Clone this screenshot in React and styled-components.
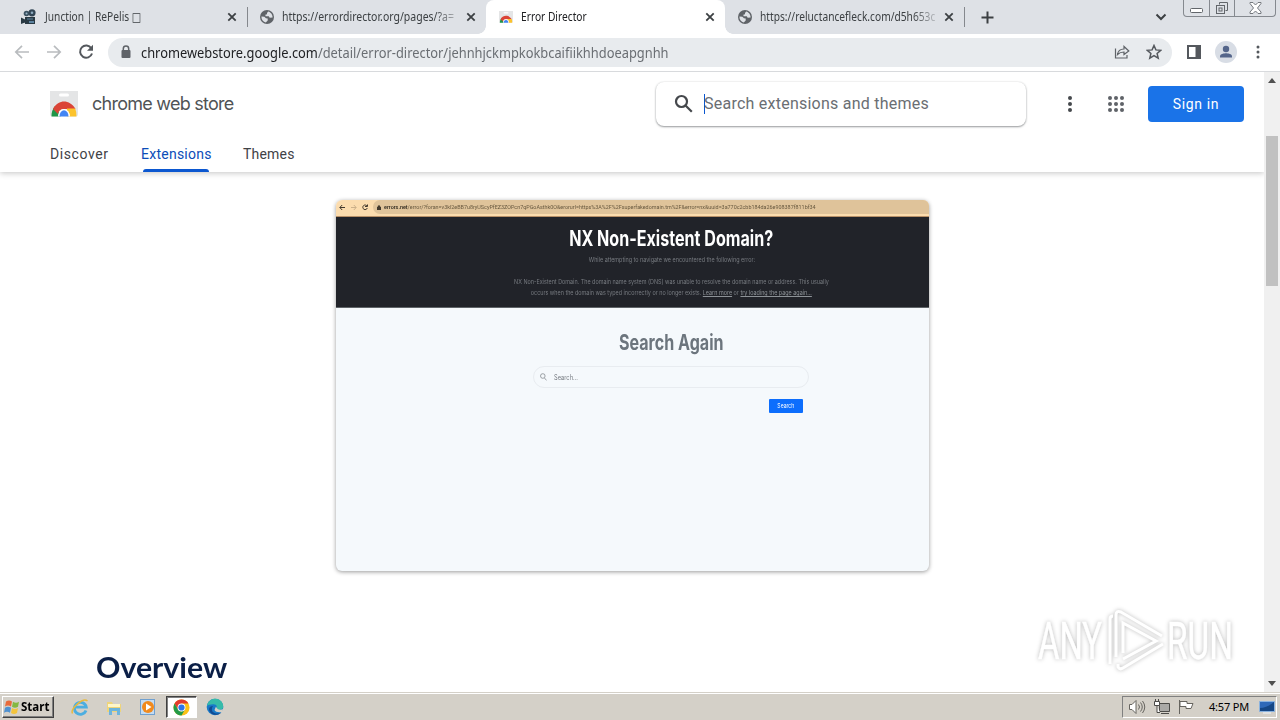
import React, {Fragment} from 'react';
import styled, {createGlobalStyle, css} from 'styled-components';

const GlobalStyle = createGlobalStyle`
  * {
    box-sizing: border-box;
  }

  body {
    margin: 0;
    overflow: hidden;
    background: #fff;
    font-family: Roboto, 'Liberation Sans', sans-serif;
  }
`;

const tahoma = css`
  font-family: 'Noto Sans', 'DejaVu Sans', sans-serif;
`;

const Screen = styled.div`
  position: relative;
  display: flex;
  flex-direction: column;
  width: 1280px;
  height: 720px;
  overflow: hidden;
`;

const Label = styled.span`
  display: inline-block;
  white-space: nowrap;
  letter-spacing: ${p => p.$spacing || 0}px;
  transform: scaleX(${p => p.$stretch || 1});
  transform-origin: ${p => p.$origin || 'left'} center;
`;

/* Tab strip */

const TabStrip = styled.div`
  display: flex;
  height: 34px;
  padding-left: 8px;
  background: #dee1e6;
`;

const Tab = styled.div`
  position: relative;
  display: flex;
  align-items: center;
  width: 239px;
  height: 34px;
  padding: 0 8px 0 13px;
  color: #3c4043;

  ${p =>
    p.$active &&
    css`
      color: #202124;
      background: #fff;
      border-radius: 8px 8px 0 0;

      &::before,
      &::after {
        content: '';
        position: absolute;
        bottom: 0;
        left: -8px;
        width: 8px;
        height: 8px;
        background: radial-gradient(circle at 0 0, #dee1e6 7.5px, #fff 8px);
      }

      &::after {
        right: -8px;
        left: auto;
        background: radial-gradient(circle at 100% 0, #dee1e6 7.5px, #fff 8px);
      }
    `}
`;

const TabTitle = styled.div`
  ${tahoma}
  width: 176px;
  margin-left: 8px;
  font-size: 12px;
  line-height: 18px;
  white-space: nowrap;
  ${p => p.$fade && 'mask-image: linear-gradient(90deg, #000 152px, transparent 182px);'}
`;

const CloseIcon = styled.svg`
  flex: none;
  width: 10px;
  height: 10px;
  margin-left: auto;
  margin-right: 2px;
`;

const TabDivider = styled.i`
  width: 1px;
  height: 20px;
  margin: 7px -1px 0 0;
  background: #85888d;
`;

const NewTab = styled.div`
  display: flex;
  align-items: center;
  margin-left: 17px;
`;

const StripEnd = styled.div`
  display: flex;
  align-items: flex-start;
  margin-left: auto;
  padding-right: 4px;
`;

const Chevron = styled.svg`
  width: 12px;
  height: 8px;
  margin: 13px 16px 0 0;
`;

const WindowButtons = styled.div`
  display: flex;
  width: 93px;
  height: 17px;
  border: 1px solid #85898f;
  border-top: 0;
  border-radius: 0 0 4px 4px;
`;

const WindowButton = styled.div`
  display: flex;
  align-items: center;
  justify-content: center;
  width: ${p => p.$width}px;

  & + & {
    border-left: 1px solid #85898f;
  }
`;

/* Address bar */

const Toolbar = styled.div`
  display: flex;
  align-items: center;
  height: 38px;
  padding: 0 0 1px 14px;
  border-bottom: 1px solid #d8dadd;
  background: #fff;
`;

const ToolbarIcon = styled.svg`
  flex: none;
  width: ${p => p.$size || 16}px;
  height: ${p => p.$size || 16}px;
  margin-right: ${p => p.$gap ?? 16}px;
`;

const Omnibox = styled.div`
  display: flex;
  flex: none;
  align-items: center;
  width: 1064px;
  height: 29px;
  margin: 0 14px 0 -2px;
  padding: 0 10px;
  border-radius: 15px;
  background: #e8ebee;
`;

const Url = styled.div`
  ${tahoma}
  flex: 1;
  padding-left: 7px;
  font-size: 15px;
  line-height: 22px;
  color: #6a6e73;

  b {
    font-weight: 400;
    color: #202124;
  }
`;

/* Page */

const Viewport = styled.div`
  display: flex;
  height: 620px;
`;

const Page = styled.main`
  flex: 1;
  height: 620px;
  overflow: hidden;
`;

const StoreHeader = styled.header`
  height: 100px;
  background: #fff;
  box-shadow: 0 1px 6px rgba(0, 0, 0, 0.24);
`;

const HeaderRow = styled.div`
  display: flex;
  align-items: center;
  height: 64px;
  padding: 0 20px 0 50px;
`;

const StoreName = styled.div`
  width: 564px;
  margin-left: 14px;
  padding-bottom: 2px;
  font-family: Inter, sans-serif;
  font-size: 18px;
  color: #505356;
`;

const SearchBox = styled.div`
  display: flex;
  align-items: center;
  width: 370px;
  height: 44px;
  padding-left: 18px;
  border-radius: 8px;
  background: #fff;
  box-shadow: 0 1px 2px rgba(60, 64, 67, 0.5), 0 0 2px rgba(60, 64, 67, 0.15);
  font-size: 16px;
  color: #6a6e73;

  span {
    margin-left: -1px;
    padding-bottom: 2px;
  }
`;

const Caret = styled.i`
  width: 1px;
  height: 20px;
  margin-left: 10px;
  background: #0b57d0;
`;

const MoreIcon = styled.svg`
  width: 6px;
  height: 18px;
  margin-left: 41px;
`;

const AppsIcon = styled.svg`
  width: 16px;
  height: 16px;
  margin: 0 24px 0 35px;
`;

const SignIn = styled.button`
  width: 96px;
  height: 36px;
  padding: 0;
  border: 0;
  border-radius: 4px;
  background: #1a73e8;
  color: #fff;
  font: 400 14px Roboto, sans-serif;
`;

const Nav = styled.nav`
  display: flex;
  gap: 32px;
  height: 36px;
  padding-left: 50px;
`;

const NavItem = styled.div`
  width: ${p => p.$width}px;
  padding: 0 2px;
  font-size: 14px;
  line-height: 36px;
  color: ${p => (p.$active ? '#0b4cb8' : '#3f4246')};

  span {
    margin-left: -2px;
  }

  &::after {
    content: '';
    display: ${p => (p.$active ? 'block' : 'none')};
    height: 3px;
    margin-top: -3px;
    border-radius: 3px 3px 0 0;
    background: #0b57d0;
  }
`;

const Scrollbar = styled.div`
  display: flex;
  flex-direction: column;
  align-items: center;
  justify-content: space-between;
  width: 16px;
  padding: 6px 0 6px;
  background: #f0f0f0;
`;

const ScrollArrow = styled.svg`
  width: 8px;
  height: 5px;
`;

const ScrollThumb = styled.div`
  width: 12px;
  height: 150px;
  margin: 53px 0 auto;
  background: #c1c1c1;
`;

/* Promo card */

const Promo = styled.section`
  width: 593px;
  height: 371px;
  margin: 28px 0 0 336px;
  overflow: hidden;
  border-radius: 6px;
  background: #f5f9fc;
  box-shadow: 0 1px 4px rgba(0, 0, 0, 0.4);
`;

const PromoBar = styled.div`
  display: flex;
  align-items: center;
  height: 17px;
  padding: 0 0 2px 3px;
  border-bottom: 1px solid #b79068;
  background: #fbdcae;
  font-size: 6px;
  color: #41382c;
`;

const PromoUrl = styled.div`
  flex: 1;
  display: flex;
  align-items: center;
  gap: 3px;
  height: 14px;
  margin-left: 4px;
  padding-left: 4px;
  border-radius: 7px 0 0 7px;
  background: #dfc39a;
  color: #67583f;
  line-height: 14px;

  b {
    font-weight: 500;
    color: #2a241b;
  }
`;

const PromoDark = styled.div`
  height: 91px;
  padding: 9px 0 0 78px;
  border-bottom: 1px solid #5f6468;
  background: #212329;
  color: #777b80;
  font-family: Inter, sans-serif;
  font-size: 6.8px;
  text-align: center;

  p {
    margin: 0;
    line-height: 11px;
  }

  h2 + p {
    margin: 2px 0 11px;
  }

  u {
    color: #8d9297;
  }
`;

const PromoTitle = styled.h2`
  margin: 0;
  font: 700 21px/26px Inter, sans-serif;
  color: ${p => p.$color};
`;

const PromoBody = styled.div`
  display: flex;
  flex-direction: column;
  align-items: center;
  padding: 22px 0 0 77px;
`;

const PromoSearch = styled.div`
  display: flex;
  align-items: center;
  gap: 7px;
  width: 276px;
  height: 22px;
  margin-top: 10px;
  padding-left: 6px;
  border: 1px solid #e8ecf0;
  border-radius: 11px;
  color: #777c82;
  font: 7px Inter, sans-serif;
`;

const PromoButtonRow = styled.div`
  display: flex;
  justify-content: flex-end;
  width: 276px;
  padding: 11px 6px 0 0;
`;

const PromoButton = styled.div`
  width: 34px;
  height: 14px;
  border-radius: 1px;
  background: #0d6efd;
  color: #fff;
  font: 6.5px/14px Inter, sans-serif;
  text-align: center;
`;

const Overview = styled.h1`
  margin: 78px 0 0 96px;
  font: 700 28px/36px Lato, sans-serif;
  color: #0b1f47;
`;

const Watermark = styled.svg`
  position: absolute;
  top: 600px;
  left: 1020px;
  width: 240px;
  height: 80px;
  filter: drop-shadow(0 0 2px rgba(0, 0, 0, 0.28));
`;

/* Taskbar */

const Taskbar = styled.footer`
  ${tahoma}
  display: flex;
  align-items: center;
  height: 28px;
  padding: 3px 3px 2px 2px;
  border-top: 1px solid #d4d0c8;
  background: #d4d0c8;
  box-shadow: inset 0 1px #fff;
`;

const StartButton = styled.div`
  display: flex;
  align-items: center;
  gap: 1px;
  width: 52px;
  height: 22px;
  margin-right: 17px;
  padding-left: 1px;
  border: 1px solid;
  border-color: #fff #404040 #404040 #fff;
  box-shadow: inset -1px -1px #808080;
  font-size: 12px;
  font-weight: 700;
  line-height: 18px;
  color: #000;
`;

const TaskIcon = styled.svg`
  width: 18px;
  height: 18px;
  margin-right: ${p => p.$gap ?? 16}px;
`;

const PressedTask = styled.div`
  display: flex;
  align-items: center;
  justify-content: center;
  width: 31px;
  height: 22px;
  margin-right: 9px;
  border: 1px solid;
  border-color: #404040 #fff #fff #404040;
  background: #fff;
  box-shadow: inset 1px 1px #808080;
`;

const Tray = styled.div`
  display: flex;
  align-items: center;
  width: 155px;
  height: 22px;
  margin-left: auto;
  padding-left: 5px;
  border: 1px solid;
  border-color: #808080 #fff #fff #808080;
  font-size: 11px;
  color: #000;
`;

const Clock = styled.div`
  width: 50px;
  margin-left: -2px;
  padding-bottom: 1px;
`;

const Close = () => (
  <CloseIcon viewBox="0 0 10 10">
    <path d="M1.3 1.3l7.4 7.4M8.7 1.3L1.3 8.7" stroke="#3c4043" strokeWidth="1.8" />
  </CloseIcon>
);

const Globe = () => (
  <svg width="14" height="14" viewBox="0 0 14 14">
    <circle cx="7" cy="7" r="7" fill="#5f6368" />
    <path
      d="M1.4 6.4l3 .3 1.5 1.5 1.8.4v2l-1.9 1.9C3.3 11.8 1.3 9.5 1.4 6.4zM8.2 1.5L7 3v1.3l-1.7.5.3 1.5h3.2l.9 1.5 2.9-.2C12.7 4.5 10.6 2.1 8.2 1.5z"
      fill="#dee1e6"
    />
  </svg>
);

const Camera = () => (
  <svg width="16" height="16" viewBox="0 0 16 16">
    <circle cx="5.5" cy="4.5" r="2.8" fill="#3d5363" />
    <circle cx="11" cy="3.8" r="3.6" fill="#314555" />
    <circle cx="5.5" cy="4.5" r="1" fill="#9cb7c8" />
    <circle cx="11" cy="3.8" r="1.3" fill="#8dabc0" />
    <path d="M4 8h10v7H4zM0 8.5l4 2v3l-4 1.5z" fill="#293943" />
    <path d="M6 9.5h6v1H6zM8 12h5v2H8z" fill="#5d83a0" />
  </svg>
);

const StoreIcon = ({width, height}) => (
  <svg width={width} height={height} viewBox="0 0 28 26" preserveAspectRatio="none">
    <path d="M0 0h28v23q0 2.5-2.5 2.5h-23Q0 25.5 0 23z" fill="#e4e5e6" />
    <rect x="9" y="2.5" width="10" height="3" rx="1.5" fill="#fff" />
    <path d="M1.5 25.5A12.5 14.5 0 0 1 5 15l6 10.5z" fill="#1e9648" />
    <path d="M3 18C6 12.5 10 10.5 14 10.5S23 13 25.5 18H14q-5 0-6 5z" fill="#db4437" />
    <path d="M17 17.5h8.2q1.3 3 1.3 8H17z" fill="#fcc32c" />
    <path d="M8 25.5a6 7.5 0 0 1 12 0z" fill="#fff" />
    <path d="M9.5 25.5a4.5 6.2 0 0 1 9 0z" fill="#4285f4" />
  </svg>
);

const ChromeLogo = () => (
  <svg width="17" height="17" viewBox="0 0 18 18">
    <circle cx="9" cy="9" r="8.5" fill="#fbc116" />
    <path d="M1.64 4.75A8.5 8.5 0 0 1 16.36 4.75H9L5.3 11.1z" fill="#e33b2e" />
    <path d="M1.64 4.75L5.3 11.1Q6.5 13.3 9 13.3l3.7-2.2L9 17.5A8.5 8.5 0 0 1 1.64 4.75z" fill="#229a48" />
    <circle cx="9" cy="9" r="4.2" fill="#fff" />
    <circle cx="9" cy="9" r="3.3" fill="#2f75e8" />
  </svg>
);

const BrowserTabs = () => (
  <TabStrip>
    <Tab>
      <Camera />
      <TabTitle>
        <Label $stretch={0.85}>Junction | RePelis □</Label>
      </TabTitle>
      <Close />
    </Tab>
    <TabDivider />
    <Tab>
      <Globe />
      <TabTitle $fade>
        <Label $stretch={0.875}>https://errordirector.org/pages/?a=</Label>
      </TabTitle>
      <Close />
    </Tab>
    <Tab $active>
      <StoreIcon width={14} height={12} />
      <TabTitle>
        <Label $stretch={0.85}>Error Director</Label>
      </TabTitle>
      <Close />
    </Tab>
    <Tab>
      <Globe />
      <TabTitle $fade>
        <Label $stretch={0.85}>https://reluctancefleck.com/d5h653c</Label>
      </TabTitle>
      <Close />
    </Tab>
    <TabDivider />
    <NewTab>
      <svg width="13" height="13" viewBox="0 0 13 13">
        <path d="M6.5 .5v12M.5 6.5h12" stroke="#3c4043" strokeWidth="2" />
      </svg>
    </NewTab>
    <StripEnd>
      <Chevron viewBox="0 0 12 8">
        <path d="M1.5 1.5L6 6l4.5-4.5" fill="none" stroke="#3c4043" strokeWidth="2" />
      </Chevron>
      <WindowButtons>
        <WindowButton $width={25}>
          <svg width="13" height="16" viewBox="0 0 13 16">
            <rect x=".5" y="8.5" width="12" height="4" rx="1" fill="#fff" stroke="#62666b" />
          </svg>
        </WindowButton>
        <WindowButton $width={25}>
          <svg width="14" height="14" viewBox="0 0 14 14" fill="none" stroke="#62666b">
            <path d="M4.5 3.5v-2h8v8h-2" />
            <rect x="1.5" y="4.5" width="8" height="8" />
            <rect x="4" y="7" width="3" height="3" />
          </svg>
        </WindowButton>
        <WindowButton $width={41}>
          <svg width="13" height="12" viewBox="0 0 13 12">
            <path
              d="M1 .5h3L6.5 3 9 .5h3v1L8.5 6l3.5 4v1.5H9L6.5 9 4 11.5H1V10l3.5-4L1 1.5z"
              fill="#fff"
              stroke="#74787e"
            />
          </svg>
        </WindowButton>
      </WindowButtons>
    </StripEnd>
  </TabStrip>
);

const AddressBar = () => (
  <Toolbar>
    <ToolbarIcon viewBox="0 0 16 16" fill="none" stroke="#b9bcbf" strokeWidth="1.7">
      <path d="M15 8H2M8 1.8L1.8 8 8 14.2" />
    </ToolbarIcon>
    <ToolbarIcon viewBox="0 0 16 16" fill="none" stroke="#b9bcbf" strokeWidth="1.7">
      <path d="M1 8h13M8 1.8L14.2 8 8 14.2" />
    </ToolbarIcon>
    <ToolbarIcon viewBox="0 0 16 16">
      <path d="M13.3 4.3A6.1 6.1 0 1 0 14 9.5" fill="none" stroke="#54585d" strokeWidth="2" />
      <path d="M15 .8v6H9z" fill="#54585d" />
    </ToolbarIcon>
    <Omnibox>
      <ToolbarIcon viewBox="0 0 16 16" $gap={0}>
        <rect x="3.5" y="6" width="9" height="8" rx="1" fill="#5f6368" />
        <path d="M5.3 6.5V4.7a2.7 2.7 0 0 1 5.4 0v1.8" fill="none" stroke="#5f6368" strokeWidth="1.5" />
      </ToolbarIcon>
      <Url>
        <Label $stretch={0.857}>
          <b>chromewebstore.google.com</b>/detail/error-director/jehnhjckmpkokbcaifiikhhdoeapgnhh
        </Label>
      </Url>
      <ToolbarIcon viewBox="0 0 16 16" fill="none" stroke="#5f6368" strokeWidth="1.2">
        <path d="M1.5 4.5v9.5h11.5v-3M3.5 10.5C4 7 6.5 5 10 5V2.5L14.8 7 10 10.5V8C7.5 8 5.5 8.5 3.5 10.5z" />
      </ToolbarIcon>
      <ToolbarIcon viewBox="0 0 16 16" $gap={0}>
        <path
          d="M8 1.5l1.9 4.4 4.8.4-3.6 3.2 1.1 4.7L8 11.7l-4.2 2.5 1.1-4.7L1.3 6.3l4.8-.4z"
          fill="none"
          stroke="#54585d"
          strokeWidth="1.5"
        />
      </ToolbarIcon>
    </Omnibox>
    <ToolbarIcon viewBox="0 0 16 16" $gap={13}>
      <path d="M2 2h12v12H2z" fill="none" stroke="#54585d" strokeWidth="2" />
      <path d="M9.5 2H15v12H9.5z" fill="#54585d" />
    </ToolbarIcon>
    <ToolbarIcon viewBox="0 0 22 22" $size={22} $gap={13}>
      <circle cx="11" cy="11" r="11" fill="#d8dde5" />
      <circle cx="11" cy="8" r="3.2" fill="#54658a" />
      <path d="M5 16.5v-1.3C5 13 9 12.2 11 12.2s6 .8 6 3v1.3z" fill="#54658a" />
    </ToolbarIcon>
    <ToolbarIcon viewBox="0 0 16 16" $gap={0} fill="#54585d">
      <circle cx="8" cy="3" r="1.5" />
      <circle cx="8" cy="8" r="1.5" />
      <circle cx="8" cy="13" r="1.5" />
    </ToolbarIcon>
  </Toolbar>
);

const DOTS = [2, 8, 14];

const Header = () => (
  <StoreHeader>
    <HeaderRow>
      <StoreIcon width={28} height={26} />
      <StoreName>
        <Label $spacing={-0.75}>chrome web store</Label>
      </StoreName>
      <SearchBox>
        <svg width="20" height="20" viewBox="0 0 20 20" fill="none" stroke="#45484c" strokeWidth="2.2">
          <circle cx="7.5" cy="7.5" r="5.5" />
          <path d="M11.5 11.5l6.3 6.3" />
        </svg>
        <Caret />
        <Label $spacing={0.24}>Search extensions and themes</Label>
      </SearchBox>
      <MoreIcon viewBox="0 0 6 18" fill="#45484c">
        {[3, 9, 15].map(y => (
          <circle key={y} cx="3" cy={y} r="2" />
        ))}
      </MoreIcon>
      <AppsIcon viewBox="0 0 16 16" fill="#5f6368">
        {DOTS.map(y => (
          <Fragment key={y}>
            {DOTS.map(x => (
              <circle key={x} cx={x} cy={y} r="2" />
            ))}
          </Fragment>
        ))}
      </AppsIcon>
      <SignIn>
        <Label $spacing={0.65}>Sign in</Label>
      </SignIn>
    </HeaderRow>
    <Nav>
      <NavItem $width={59}>
        <Label $spacing={0.6}>Discover</Label>
      </NavItem>
      <NavItem $width={70} $active>
        <Label $spacing={0.25}>Extensions</Label>
      </NavItem>
      <NavItem $width={52}>
        <Label $spacing={0.2}>Themes</Label>
      </NavItem>
    </Nav>
  </StoreHeader>
);

const PromoCard = () => (
  <Promo>
    <PromoBar>
      <svg width="30" height="7" viewBox="0 0 30 7" fill="none" stroke="#41382c">
        <path d="M6 3.5H1M3.2 1L.8 3.5 3.2 6" />
        <path d="M12 3.5h5M14.8 1l2.4 2.5L14.8 6" stroke="#cbb08a" />
        <path d="M28 2A2.3 2.3 0 1 0 28.3 4M28.5 .5v2H26" />
      </svg>
      <PromoUrl>
        <svg width="4" height="5" viewBox="0 0 4 5" fill="#41382c">
          <path d="M0 2h4v3H0zM.7 2V1q1.3-1.5 2.6 0v1z" />
        </svg>
        <Label $stretch={0.9}>
          <b>errors.net</b>
          /error/?foran=v3kl2eBB7u8ryUScyPfEZ3ZOPcn7qPGoAsthk0O&erorurl=https%3A%2F%2Fsuperfakedomain.tm%2F&error=nx&uuid=3a770c2cbb184da26e908387f811bf34
        </Label>
      </PromoUrl>
    </PromoBar>
    <PromoDark>
      <PromoTitle $color="#fff">
        <Label $stretch={0.766} $origin="center">
          NX Non-Existent Domain?
        </Label>
      </PromoTitle>
      <p>
        <Label $stretch={0.8} $origin="center">
          While attempting to navigate we encountered the following error:
        </Label>
      </p>
      <p>
        <Label $stretch={0.797} $origin="center">
          NX Non-Existent Domain. The domain name system (DNS) was unable to resolve the domain name or address. This
          usually
        </Label>
      </p>
      <p>
        <Label $stretch={0.797} $origin="center">
          occurs when the domain was typed incorrectly or no longer exists. <u>Learn more</u> or{' '}
          <u>try loading the page again...</u>
        </Label>
      </p>
    </PromoDark>
    <PromoBody>
      <PromoTitle $color="#6c757d">
        <Label $stretch={0.765} $origin="center">
          Search Again
        </Label>
      </PromoTitle>
      <PromoSearch>
        <svg width="7" height="8" viewBox="0 0 7 8" fill="none" stroke="#777c82" strokeWidth=".7">
          <circle cx="2.8" cy="3" r="2.3" />
          <path d="M4.5 5l2 2.4" />
        </svg>
        <Label $stretch={0.82}>Search...</Label>
      </PromoSearch>
      <PromoButtonRow>
        <PromoButton>
          <Label $stretch={0.78} $origin="center">
            Search
          </Label>
        </PromoButton>
      </PromoButtonRow>
    </PromoBody>
  </Promo>
);

const AnyRun = () => (
  <Watermark viewBox="1020 600 240 80" fill="none" stroke="#fff" strokeWidth="3">
    <g fill="#fff" stroke="#fff" strokeWidth=".5" fontFamily="Roboto" fontSize="51">
      <text x="1038" y="659" textLength="64" lengthAdjust="spacingAndGlyphs">
        ANY
      </text>
      <text x="1167" y="659" textLength="66" lengthAdjust="spacingAndGlyphs">
        RUN
      </text>
    </g>
    <path d="M1116 657V615q0-5 5-3l41 24" />
    <path d="M1123 653V623l33 18-33 18" />
    <path d="M1110 664v-45q0-3 3-3M1118 664v3q2 3 5 1l40-24" />
  </Watermark>
);

const TaskbarPanel = () => (
  <Taskbar>
    <StartButton>
      <svg width="16" height="16" viewBox="0 0 16 16">
        <path d="M2 2.5q3-2 6 0L7 7.5q-3-2-6 0z" fill="#e86a3a" />
        <path d="M9 2.8q3 2 6 0l-1 5q-3 2-6 0z" fill="#84b840" />
        <path d="M1 8.7q3-2 6 0l-1 5q-3-2-6 0z" fill="#4f91d0" />
        <path d="M8 9q3 2 6 0l-1 5q-3 2-6 0z" fill="#f3c43c" />
      </svg>
      <Label $stretch={0.96}>Start</Label>
    </StartButton>
    <TaskIcon viewBox="0 0 18 18" fill="none">
      <path d="M15 12.5A6 6 0 1 1 15.3 9.2H4" stroke="#4caee0" strokeWidth="2.8" />
      <path d="M1.5 15.5C-1 11 12-1 16.5 3" stroke="#e8b93d" strokeWidth="1.5" />
    </TaskIcon>
    <TaskIcon viewBox="0 0 18 18">
      <path d="M2 4h5l1 2h8v8H2z" fill="#eed47a" />
      <path d="M3 6h12v3H3z" fill="#fff6c8" />
      <path d="M4 17v-7h11v7h-3v-4H7v4z" fill="#6db4dc" />
    </TaskIcon>
    <TaskIcon viewBox="0 0 18 18" $gap={9}>
      <rect x="1.5" y="1.5" width="14" height="15" fill="#c5dcf2" stroke="#70a0cf" />
      <circle cx="9" cy="9" r="6" fill="#f18a1d" />
      <path d="M7 5.5v7l5.5-3.5z" fill="#fff" />
    </TaskIcon>
    <PressedTask>
      <ChromeLogo />
    </PressedTask>
    <TaskIcon viewBox="0 0 18 18">
      <circle cx="9" cy="9" r="8.3" fill="#1879c8" />
      <path d="M1 8C2 2 7 .5 10 .8c5 .5 8 5 7 9-.7 2-4 3-6.5 1.5 1-2 .5-5-3-5C4.5 6.2 2 7 1 8z" fill="#36bba9" />
      <path d="M7 8c-3 4 0 9 8 7-5 4-12 1-12-4 0-2 2-3 4-3z" fill="#124b92" />
      <path d="M10 8.5q2 5 7.5 2.5l-1.3 3Q10 15 8.5 12z" fill="#d4d0c8" />
    </TaskIcon>
    <Tray>
      <TaskIcon viewBox="0 0 18 18" $gap={7} fill="#fff" stroke="#66645f">
        <path d="M1.5 6.5H4l4-4v13l-4-4H1.5z" />
        <path d="M10.5 6.5q2 2.5 0 5M12.5 4.5q3.5 4.5 0 9M14.5 3q4.5 6 0 12" fill="none" />
      </TaskIcon>
      <TaskIcon viewBox="0 0 18 18" $gap={6} stroke="#4c4b48">
        <path d="M6.5 5.5h10v8h-10z" fill="#aaa9a6" />
        <path d="M8 15.5h8M1.5 3.5h5v4h-5zM2.5 1v2.5M5.5 1v2.5M4 7.5v7h3" fill="#fff" />
      </TaskIcon>
      <TaskIcon viewBox="0 0 18 18" $gap={16} stroke="#66645f">
        <path d="M2.5 2v14M3 3.5h7v2h6l-2 5H9v-2H3z" fill="#fff" />
      </TaskIcon>
      <Clock>
        <Label $spacing={-0.2}>4:57 PM</Label>
      </Clock>
      <svg width="16" height="14" viewBox="0 0 16 14">
        <path d="M.5 1.5h15v10H.5z" fill="#2f69b8" stroke="#8bb3df" />
        <path d="M1 8q7 0 14-6v9H1z" fill="#164785" />
        <path d="M4 13h8" stroke="#eef4fa" />
      </svg>
    </Tray>
  </Taskbar>
);

const App = () => (
  <Fragment>
    <GlobalStyle />
    <Screen>
      <BrowserTabs />
      <AddressBar />
      <Viewport>
        <Page>
          <Header />
          <PromoCard />
          <Overview>
            <Label $stretch={1.08}>Overview</Label>
          </Overview>
        </Page>
        <Scrollbar>
          <ScrollArrow viewBox="0 0 8 5">
            <path d="M0 5l4-5 4 5z" fill="#505050" />
          </ScrollArrow>
          <ScrollThumb />
          <ScrollArrow viewBox="0 0 8 5">
            <path d="M0 0h8L4 5z" fill="#505050" />
          </ScrollArrow>
        </Scrollbar>
      </Viewport>
      <TaskbarPanel />
      <AnyRun />
    </Screen>
  </Fragment>
);

export default App;
